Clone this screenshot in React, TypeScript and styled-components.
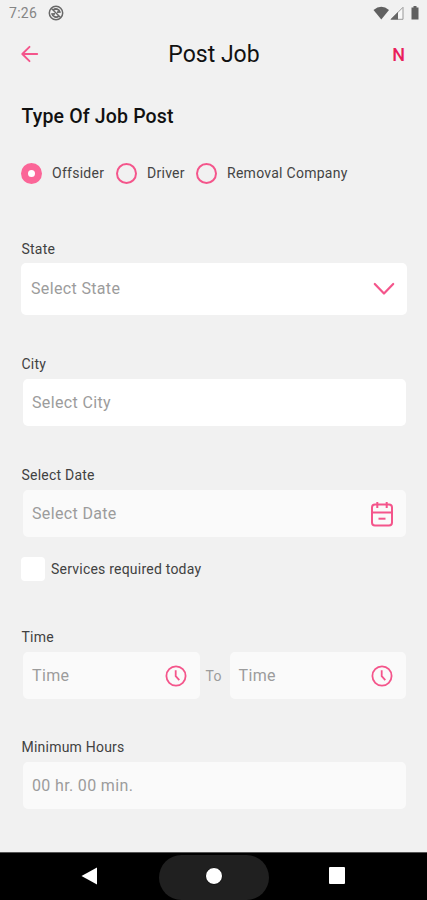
import React from "react";
import styled, { createGlobalStyle } from "styled-components";

const PINK = "#f4558b";

const Global = createGlobalStyle`
  * { box-sizing: border-box; }
  body { margin: 0; background: #f1f1f1; font-family: Roboto, sans-serif; }
`;

const Screen = styled.div`
  width: 427px;
  height: 900px;
  display: flex;
  flex-direction: column;
  background: #f1f1f1;
  overflow: hidden;
`;

const StatusBar = styled.div`
  height: 28px;
  padding: 0 7px 2px 9px;
  display: flex;
  align-items: center;
  font-size: 14px;
  line-height: 16px;
  letter-spacing: 0.3px;
  color: #858585;
  svg { display: block; }
`;

const StatusLeft = styled.div`
  flex: 1;
  display: flex;
  align-items: center;
  gap: 11px;
`;

const Header = styled.header`
  height: 52px;
  padding: 1px 22px 0 20px;
  display: grid;
  grid-template-columns: 60px 1fr 60px;
  align-items: center;
`;

const BackArrow = styled.svg`
  display: block;
  margin-bottom: 1px;
`;

const Title = styled.h1`
  margin: 0;
  padding-left: 3px;
  font-size: 23px;
  line-height: 28px;
  font-weight: 400;
  text-align: center;
  color: #111;
`;

const Brand = styled.span`
  justify-self: end;
  font-size: 18px;
  line-height: 20px;
  font-weight: 500;
  color: #e91e5b;
`;

const Form = styled.main`
  flex: 1;
  padding: 25px 20px 0 21px;
  display: flex;
  flex-direction: column;
`;

const SectionTitle = styled.h2`
  margin: 0 0 33px;
  padding-left: 0.5px;
  font-size: 19.5px;
  line-height: 24px;
  font-weight: 500;
  letter-spacing: 0.15px;
  color: #111;
`;

const RadioRow = styled.div`
  height: 22px;
  margin-bottom: 56px;
  display: flex;
  align-items: center;
`;

const RadioOption = styled.div<{ $width: number }>`
  width: ${(p) => p.$width}px;
  flex: none;
  display: flex;
  align-items: center;
  gap: 10px;
  font-size: 14px;
  line-height: 20px;
  letter-spacing: 0.27px;
  white-space: nowrap;
  color: #444;
`;

const RadioMark = styled.span<{ $checked?: boolean }>`
  width: 21px;
  height: 21px;
  flex: none;
  border-radius: 50%;
  border: ${(p) => (p.$checked ? "7.5px solid #fb6698" : `2px solid ${PINK}`)};
  background: ${(p) => (p.$checked ? "#fff" : "transparent")};
`;

const Field = styled.section<{ $height: number }>`
  height: ${(p) => p.$height}px;
  flex: none;
`;

const Label = styled.div`
  height: 24px;
  padding-left: 0.5px;
  font-size: 14px;
  line-height: 18px;
  letter-spacing: 0.22px;
  color: #414141;
`;

const Box = styled.div<{ $kind?: "select" | "solid" }>`
  flex: 1;
  height: ${(p) => (p.$kind === "select" ? 52 : 47)}px;
  margin: ${(p) => (p.$kind === "select" ? "-1px 0 0" : "0 0 0 2px")};
  padding: 0 ${(p) => (p.$kind === "select" ? "12px 0 10px" : "12px 0 9px")};
  display: flex;
  align-items: center;
  justify-content: space-between;
  border-radius: 5px;
  background: ${(p) => (p.$kind ? "#fff" : "#fafafa")};
  svg { display: block; }
`;

const Placeholder = styled.span`
  font-size: 16px;
  line-height: 20px;
  letter-spacing: 0.35px;
  color: #9c9c9c;
`;

const Inset = styled.div`
  display: flex;
  padding-right: 1px;
`;

const CheckRow = styled.div`
  margin-top: 20px;
  display: flex;
  align-items: center;
  gap: 6px;
  font-size: 14px;
  line-height: 20px;
  letter-spacing: 0.22px;
  color: #414141;
`;

const Checkbox = styled.span`
  width: 24px;
  height: 24px;
  border-radius: 4px;
  background: #fff;
`;

const To = styled.span`
  width: 28px;
  padding: 15px 0 0 6px;
  font-size: 14px;
  line-height: 18px;
  letter-spacing: 0.3px;
  color: #9c9c9c;
`;

const NavBar = styled.nav`
  height: 48px;
  border-top: 1px solid #555;
  background: #000;
  display: grid;
  grid-template-columns: 159px 110px 158px;
  svg { display: block; }
`;

const NavItem = styled.div<{ $inset: "left" | "right" }>`
  display: flex;
  align-items: center;
  padding: 0 0 2px ${(p) => (p.$inset === "left" ? 81 : 60)}px;
`;

const HomePill = styled.div`
  margin-top: 2px;
  border-radius: 23px;
  background: #202020;
  display: flex;
  justify-content: center;
  padding-top: 11px;
`;

function Clock() {
  return (
    <svg width="23" height="22" viewBox="0 0 23 22" fill="none" stroke={PINK} strokeWidth="1.8">
      <circle cx="11" cy="11" r="9.6" />
      <path d="M10.7 5.2v6l3.6 4" />
    </svg>
  );
}

function Calendar() {
  return (
    <svg width="24" height="26" viewBox="0 0 24 26" fill="none" stroke={PINK} strokeWidth="2">
      <rect x="2" y="3.5" width="20" height="21" rx="3" />
      <path d="M2 11.5h20M7.3 1v6M16.7 1v6" />
      <path d="M8.5 17.7h7" />
    </svg>
  );
}

export default function App() {
  return (
    <>
      <Global />
      <Screen>
        <StatusBar>
          <StatusLeft>
            <span>7:26</span>
            <svg width="16" height="16" viewBox="0 0 16 16" fill="none" stroke="#686868">
              <circle cx="8" cy="8" r="6.7" strokeWidth="1.5" />
              <path d="M3.2 3.3l9.6 9.5" strokeWidth="1.4" />
              <path d="M5.2 5.1A4 4 0 0 1 11.8 7L9 7.2M10.8 11A4 4 0 0 1 4.2 9L7 8.8" strokeWidth="1.8" />
            </svg>
          </StatusLeft>
          <svg width="47" height="16" viewBox="0 0 47 16">
            <path d="M.5 5Q8.3-1.5 16 5L8.3 14.4z" fill="#606060" />
            <path d="M30 2.3v12H18z" fill="#f8f8f8" stroke="#999" />
            <path d="M25 7v7.5h-7.5z" fill="#666" />
            <path d="M38.5 2.5h2V1h3v1.5h2v12h-7z" fill="#606060" />
          </svg>
        </StatusBar>
        <Header>
          <BackArrow width="20" height="20" viewBox="0 0 20 20" fill="none" stroke={PINK} strokeWidth="1.9" strokeLinecap="round" strokeLinejoin="round">
            <path d="M17.2 10H2.5M9.5 2.8L2.3 10l7.2 7.2" />
          </BackArrow>
          <Title>Post Job</Title>
          <Brand>N</Brand>
        </Header>
        <Form>
          <SectionTitle>Type Of Job Post</SectionTitle>
          <RadioRow>
            <RadioOption $width={95}><RadioMark $checked />Offsider</RadioOption>
            <RadioOption $width={80}><RadioMark />Driver</RadioOption>
            <RadioOption $width={160}><RadioMark />Removal Company</RadioOption>
          </RadioRow>
          <Field $height={115}>
            <Label>State</Label>
            <Box $kind="select">
              <Placeholder>Select State</Placeholder>
              <svg width="22" height="14" viewBox="0 0 22 14" fill="none" stroke={PINK} strokeWidth="2.2" strokeLinecap="round" strokeLinejoin="round">
                <path d="M1.8 2L11 11.5L20.2 2" />
              </svg>
            </Box>
          </Field>
          <Field $height={111}>
            <Label>City</Label>
            <Inset><Box $kind="solid"><Placeholder>Select City</Placeholder></Box></Inset>
          </Field>
          <Field $height={162}>
            <Label>Select Date</Label>
            <Inset><Box><Placeholder>Select Date</Placeholder><Calendar /></Box></Inset>
            <CheckRow><Checkbox />Services required today</CheckRow>
          </Field>
          <Field $height={110}>
            <Label>Time</Label>
            <Inset>
              <Box><Placeholder>Time</Placeholder><Clock /></Box>
              <To>To</To>
              <Box><Placeholder>Time</Placeholder><Clock /></Box>
            </Inset>
          </Field>
          <Field $height={80}>
            <Label>Minimum Hours</Label>
            <Inset><Box><Placeholder>00 hr. 00 min.</Placeholder></Box></Inset>
          </Field>
        </Form>
        <NavBar>
          <NavItem $inset="left">
            <svg width="17" height="18" viewBox="0 0 17 18"><path d="M.5 9L16 .5v17z" fill="#fff" /></svg>
          </NavItem>
          <HomePill>
            <svg width="20" height="20" viewBox="0 0 20 20"><circle cx="10" cy="10" r="8.5" fill="#fff" stroke="#0c0c0c" /></svg>
          </HomePill>
          <NavItem $inset="right">
            <svg width="16" height="17" viewBox="0 0 16 17"><rect width="16" height="17" rx="1" fill="#fff" /></svg>
          </NavItem>
        </NavBar>
      </Screen>
    </>
  );
}
